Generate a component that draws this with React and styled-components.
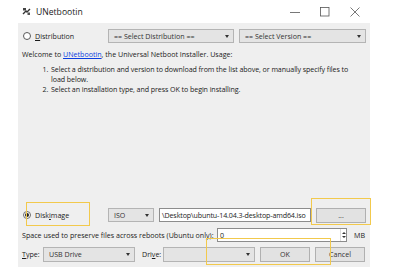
import React from "react";
import styled, { createGlobalStyle } from "styled-components";

const Global = createGlobalStyle`
  html, body { margin: 0; padding: 0; background: #ffffff; }
  body { font-family: "Open Sans", "Noto Sans", sans-serif; color: #1a1a1a; }
  #root { width: 400px; height: 274px; position: relative; overflow: hidden; }
`;

const Window = styled.div`
  width: 352px;
  margin-left: 18px;
  display: flex;
  flex-direction: column;
  font-size: 7.1px;
`;

const TitleBar = styled.div`
  height: 23px;
  display: flex;
  align-items: center;
  padding-left: 4px;
  gap: 5px;
  background: #fff;
`;

const TitleText = styled.span`
  font-size: 8.6px;
  color: #222;
  flex: 1;
`;

const Controls = styled.div`
  display: flex;
  align-items: center;
`;

const Ctrl = styled.div`
  width: 30px;
  height: 23px;
  display: flex;
  align-items: center;
  justify-content: center;
`;

const Client = styled.div`
  background: #efefef;
  height: 244px;
  padding: 5px 3px 0 4px;
  box-sizing: border-box;
  display: flex;
  flex-direction: column;
`;

const Row = styled.div`
  display: flex;
  align-items: center;
  height: ${(p) => p.h || 16}px;
  margin-top: ${(p) => p.mt || 0}px;
`;

const RadioLabel = styled.label`
  display: flex;
  align-items: center;
  gap: 4px;
  width: ${(p) => p.w}px;
  padding-left: 1px;
`;

const RadioDot = styled.span`
  width: 8px;
  height: 8px;
  border-radius: 50%;
  border: 1px solid ${(p) => (p.checked ? "#6b6b6b" : "#5a5a5a")};
  background: #fff;
  box-sizing: border-box;
  display: flex;
  align-items: center;
  justify-content: center;
  &::after {
    content: "";
    display: ${(p) => (p.checked ? "block" : "none")};
    width: 4px;
    height: 4px;
    border-radius: 50%;
    background: #222;
  }
`;

const U = styled.span`
  text-decoration: underline;
`;

const Combo = styled.div`
  width: ${(p) => p.w}px;
  height: ${(p) => p.h || 14}px;
  margin-left: ${(p) => p.ml || 0}px;
  background: #e4e4e4;
  border: 1px solid #b4b4b4;
  box-sizing: border-box;
  display: flex;
  align-items: center;
  padding: 0 4px 0 5px;
  color: #333;
  justify-content: space-between;
  flex-shrink: 0;
`;

const Arrow = styled.span`
  width: 0;
  height: 0;
  border-left: 2.5px solid transparent;
  border-right: 2.5px solid transparent;
  border-top: 3px solid #333;
`;

const Welcome = styled.div`
  margin-top: 5px;
  height: 10px;
  line-height: 10px;
`;

const Link = styled.span`
  color: #0b3de0;
  text-decoration: underline;
`;

const Usage = styled.ol`
  margin: 5px 0 0 0;
  padding-left: 28px;
  padding-right: 12px;
  line-height: 10px;
  height: 141px;
  letter-spacing: -0.08px;
  li { padding-left: 1px; }
`;

const Field = styled.div`
  width: ${(p) => p.w}px;
  height: ${(p) => p.h || 14}px;
  margin-left: ${(p) => p.ml || 0}px;
  background: #fff;
  border: 1px solid #8c8c8c;
  box-sizing: border-box;
  display: flex;
  align-items: center;
  padding-left: 2px;
  color: #222;
  white-space: nowrap;
  overflow: hidden;
  letter-spacing: ${(p) => p.ls || 0}px;
  flex-shrink: 0;
`;

const Button = styled.div`
  width: ${(p) => p.w}px;
  height: ${(p) => p.h || 15}px;
  margin-left: ${(p) => p.ml || 0}px;
  background: #e2e2e2;
  border: 1px solid #b0b0b0;
  box-sizing: border-box;
  display: flex;
  align-items: center;
  justify-content: center;
  color: #333;
  flex-shrink: 0;
`;

const Spin = styled.div`
  display: flex;
  flex-direction: column;
  justify-content: center;
  gap: 2px;
  margin-left: auto;
  width: 5px;
  height: 12px;
  border-left: 1px solid #ddd;
  align-items: center;
`;

const Up = styled.span`
  border-left: 2px solid transparent;
  border-right: 2px solid transparent;
  border-bottom: 2.5px solid #333;
`;
const Down = styled.span`
  border-left: 2px solid transparent;
  border-right: 2px solid transparent;
  border-top: 2.5px solid #333;
`;

const Text = styled.span`
  margin-left: ${(p) => p.ml || 0}px;
  width: ${(p) => (p.w ? p.w + "px" : "auto")};
  white-space: nowrap;
  flex-shrink: 0;
`;

const Highlight = styled.div`
  position: absolute;
  border: 1.5px solid #f2c94c;
  box-sizing: border-box;
`;

function TitleIcon() {
  return (
    <svg width="9" height="9" viewBox="0 0 9 9">
      <path d="M1 7 L4 4 L5 5 L8 2" stroke="#333" strokeWidth="1.4" fill="none" />
      <rect x="1" y="1" width="3" height="2.5" fill="#444" />
      <rect x="5.5" y="5.5" width="2.5" height="2.5" fill="#555" />
    </svg>
  );
}

export default function App() {
  return (
    <>
      <Global />
      <Window>
        <TitleBar>
          <TitleIcon />
          <TitleText>UNetbootin</TitleText>
          <Controls>
            <Ctrl>
              <svg width="10" height="10" viewBox="0 0 10 10">
                <path d="M0 5.5 H10" stroke="#555" strokeWidth="0.8" />
              </svg>
            </Ctrl>
            <Ctrl>
              <svg width="10" height="10" viewBox="0 0 10 10">
                <rect x="0.5" y="0.5" width="8.5" height="8.5" stroke="#555" strokeWidth="0.8" fill="none" />
              </svg>
            </Ctrl>
            <Ctrl>
              <svg width="10" height="10" viewBox="0 0 10 10">
                <path d="M0.5 0.5 L9.5 9.5 M9.5 0.5 L0.5 9.5" stroke="#555" strokeWidth="0.8" />
              </svg>
            </Ctrl>
          </Controls>
        </TitleBar>
        <Client>
          <Row h={16}>
            <RadioLabel w={85}>
              <RadioDot />
              <span><U>D</U>istribution</span>
            </RadioLabel>
            <Combo w={126}>
              <span>== Select Distribution ==</span>
              <Arrow />
            </Combo>
            <Combo w={127} ml={5}>
              <span>== Select Version ==</span>
              <Arrow />
            </Combo>
          </Row>
          <Welcome>
            Welcome to <Link>UNetbootin</Link>, the Universal Netboot Installer. Usage:
          </Welcome>
          <Usage>
            <li>Select a distribution and version to download from the list above, or manually specify files to load below.</li>
            <li>Select an installation type, and press OK to begin installing.</li>
          </Usage>
          <Row h={16} mt={2}>
            <RadioLabel w={85}>
              <RadioDot checked />
              <span>Disk<U>i</U>mage</span>
            </RadioLabel>
            <Combo w={46} h={14}>
              <span>ISO</span>
              <Arrow />
            </Combo>
            <Field w={152} ml={5} ls={-0.12}>\Desktop\ubuntu-14.04.3-desktop-amd64.iso</Field>
            <Button w={50} h={15} ml={5}>...</Button>
          </Row>
          <Row h={14} mt={5}>
            <Text w={195}>Space used to preserve files across reboots (Ubuntu only):</Text>
            <Field w={130} h={14}>
              0
              <Spin>
                <Up />
                <Down />
              </Spin>
            </Field>
            <Text ml={7}>MB</Text>
          </Row>
          <Row h={16} mt={4}>
            <Text w={21}><U>T</U>ype:</Text>
            <Combo w={92} h={15}>
              <span>USB Drive</span>
              <Arrow />
            </Combo>
            <Text ml={7} w={21}>Dri<U>v</U>e:</Text>
            <Combo w={92} h={15}>
              <span></span>
              <Arrow />
            </Combo>
            <Button w={50} ml={5}>OK</Button>
            <Button w={50} ml={5}>Cancel</Button>
          </Row>
        </Client>
      </Window>
      <Highlight style={{ left: 26, top: 202, width: 64, height: 24 }} />
      <Highlight style={{ left: 311, top: 198, width: 60, height: 27 }} />
      <Highlight style={{ left: 206, top: 238, width: 125, height: 27 }} />
    </>
  );
}
